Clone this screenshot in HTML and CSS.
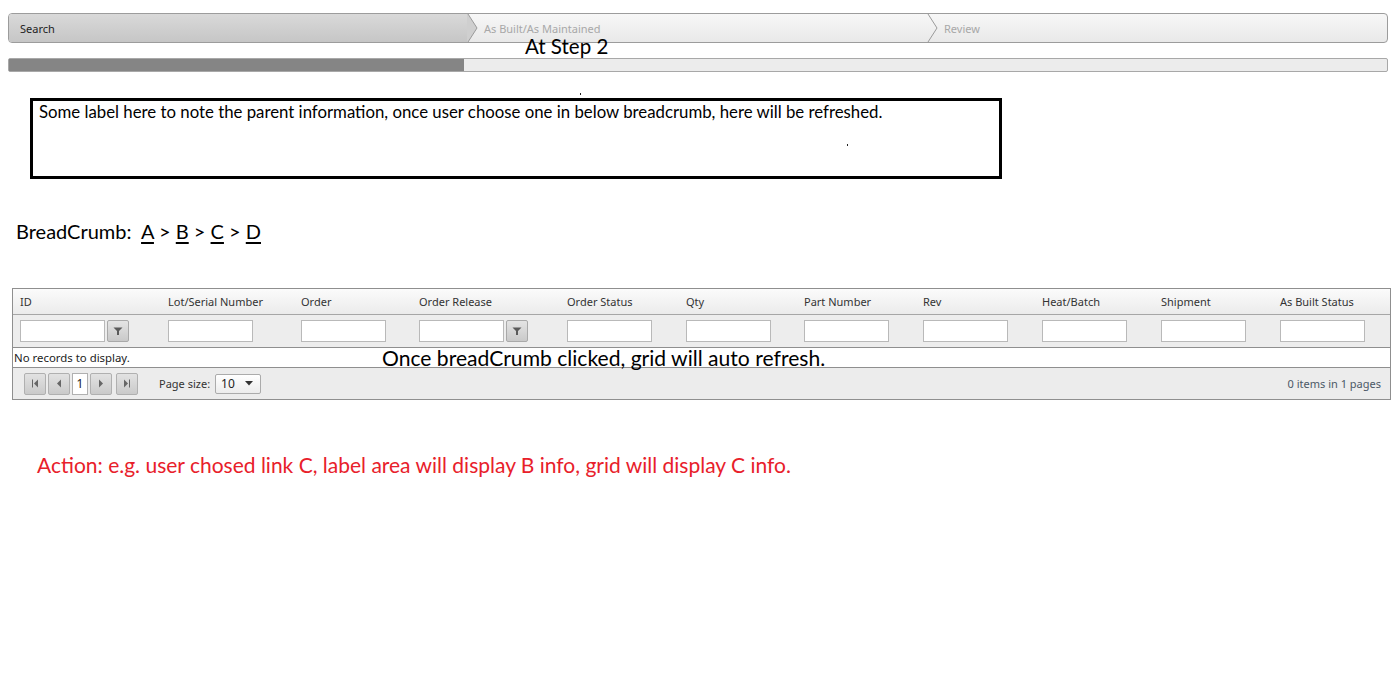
FILE: index.html
```html
<!DOCTYPE html>
<html>
<head>
<meta charset="utf-8">
<link rel="stylesheet" href="styles.css">
</head>
<body>
<div class="page">
  <div class="top">
    <div class="wizard">
      <div class="step step-active"><span>Search</span>
        <svg class="chev" width="14" height="28" viewBox="0 0 14 28"><polygon points="0,0 1,0 10,14 1,28 0,28" fill="#cdcdcd"/><polyline points="1,0 10,14 1,28" fill="none" stroke="#9a9a9a" stroke-width="1"/></svg>
      </div>
      <div class="step step-2"><span>As Built/As Maintained</span>
        <svg class="chev" width="14" height="28" viewBox="0 0 14 28"><polyline points="1,0 10,14 1,28" fill="none" stroke="#9a9a9a" stroke-width="1"/></svg>
      </div>
      <div class="step step-3"><span>Review</span></div>
    </div>
    <div class="note-step">At Step 2</div>
    <div class="progress"><div class="progress-fill"></div></div>
  </div>

  <div class="label-box">Some label here to note the parent information, once user choose one in below breadcrumb, here will be refreshed.<span class="dot dot-a"></span><span class="dot dot-b"></span></div>

  <div class="crumbs">BreadCrumb:&nbsp; <a>A</a> &gt; <a>B</a> &gt; <a>C</a> &gt; <a>D</a></div>

  <div class="grid-wrap">
    <div class="grid">
      <div class="row head">
        <div>ID</div><div>Lot/Serial Number</div><div>Order</div><div>Order Release</div><div>Order Status</div><div>Qty</div><div>Part Number</div><div>Rev</div><div>Heat/Batch</div><div>Shipment</div><div>As Built Status</div>
      </div>
      <div class="row filter">
        <div class="fcell"><span class="inp"></span><span class="fbtn"><svg width="10" height="10" viewBox="0 0 10 10"><path d="M0.5 1.5h9l-3.5 3.5v4h-2v-4z" fill="#5a5a5a"/></svg></span></div>
        <div class="fcell"><span class="inp"></span></div>
        <div class="fcell"><span class="inp"></span></div>
        <div class="fcell"><span class="inp"></span><span class="fbtn"><svg width="10" height="10" viewBox="0 0 10 10"><path d="M0.5 1.5h9l-3.5 3.5v4h-2v-4z" fill="#5a5a5a"/></svg></span></div>
        <div class="fcell"><span class="inp"></span></div>
        <div class="fcell"><span class="inp"></span></div>
        <div class="fcell"><span class="inp"></span></div>
        <div class="fcell"><span class="inp"></span></div>
        <div class="fcell"><span class="inp"></span></div>
        <div class="fcell"><span class="inp"></span></div>
        <div class="fcell"><span class="inp"></span></div>
      </div>
      <div class="norec">No records to display.</div>
      <div class="pager">
        <div class="pbtns">
          <span class="pbtn"><svg width="8" height="9" viewBox="0 0 8 9"><rect x="1" y="0.5" width="1" height="8" fill="#666"/><polygon points="7,0.5 3,4.5 7,8.5" fill="#666"/></svg></span>
          <span class="pbtn"><svg width="8" height="9" viewBox="0 0 8 9"><polygon points="6,0.5 2,4.5 6,8.5" fill="#666"/></svg></span>
          <span class="pnum">1</span>
          <span class="pbtn"><svg width="8" height="9" viewBox="0 0 8 9"><polygon points="2,0.5 6,4.5 2,8.5" fill="#666"/></svg></span>
          <span class="pbtn last"><svg width="8" height="9" viewBox="0 0 8 9"><polygon points="1,0.5 5,4.5 1,8.5" fill="#666"/><rect x="6" y="0.5" width="1" height="8" fill="#666"/></svg></span>
        </div>
        <span class="psize-label">Page size:</span>
        <span class="psize">10<svg width="8" height="5" viewBox="0 0 8 5"><polygon points="0,0 8,0 4,4.5" fill="#333"/></svg></span>
        <span class="pinfo">0 items in 1 pages</span>
      </div>
    </div>
    <div class="note-grid">Once breadCrumb clicked, grid will auto refresh.</div>
  </div>

  <div class="action">Action: e.g. user chosed link C, label area will display B info, grid will display C info.</div>
</div>
</body>
</html>
```

FILE: styles.css
```css
html, body {
  margin: 0;
  padding: 0;
  background: #ffffff;
}
.page {
  font-family: "Lato", "Open Sans", sans-serif;
  color: #000;
  padding-top: 13px;
}
.top {
  position: relative;
  margin-left: 8px;
  width: 1380px;
}
.wizard {
  display: flex;
  height: 28px;
  border: 1px solid #9c9c9c;
  border-radius: 4px;
  background: linear-gradient(#f7f7f7, #e9e9e9);
  font-family: "Noto Sans", "Open Sans", sans-serif;
  font-size: 11px;
}
.step {
  position: relative;
  display: flex;
  align-items: center;
  color: #a8a8a8;
}
.step-active {
  width: 459px;
  padding-left: 11px;
  box-sizing: border-box;
  color: #222;
  background: linear-gradient(#d9d9d9, #c6c6c6);
  border-radius: 3px 0 0 3px;
}
.step-active .chev polygon { fill: #cfcfcf; }
.step-2 {
  width: 460px;
  padding-left: 16px;
  box-sizing: border-box;
}
.step-3 {
  flex: 1;
  padding-left: 16px;
}
.chev {
  position: absolute;
  left: 100%;
  top: 0;
  margin-left: -1px;
  z-index: 2;
}
.note-step {
  position: absolute;
  left: 517px;
  top: 21px;
  font-size: 20.5px;
  line-height: 24px;
  z-index: 3;
}
.progress {
  margin-top: 15px;
  height: 12px;
  border: 1px solid #a8a8a8;
  border-radius: 2px;
  background: #ececec;
}
.progress-fill {
  width: 455px;
  height: 100%;
  background: #858585;
}
.label-box {
  position: relative;
  margin: 26px 0 0 30px;
  width: 972px;
  height: 81px;
  box-sizing: border-box;
  border: 3px solid #000;
  padding: 0 6px;
  font-size: 16.8px;
  line-height: 22px;
}
.dot {
  position: absolute;
  width: 1px;
  height: 2px;
  background: #222;
}
.dot-a { left: 547px; top: -8px; }
.dot-b { left: 814px; top: 43px; }
.crumbs {
  margin: 39px 0 0 16px;
  font-size: 20px;
  line-height: 26px;
}
.crumbs a {
  text-decoration: underline;
  text-underline-offset: 3px;
}
.grid-wrap {
  position: relative;
  margin: 44px 0 0 12px;
  width: 1379px;
}
.grid {
  border: 1px solid #8f8f8f;
  font-family: "Noto Sans", "Open Sans", sans-serif;
  font-size: 11px;
  color: #333;
}
.row {
  display: grid;
  grid-template-columns: 148px 133px 118px 148px 119px 118px 119px 119px 119px 119px 118px;
}
.head {
  height: 25px;
  align-items: center;
  background: linear-gradient(#fbfbfb, #ebebeb);
  border-bottom: 1px solid #a6a6a6;
}
.head > div {
  padding-left: 7px;
}
.filter {
  height: 32px;
  align-items: center;
  background: #ededed;
  border-bottom: 1px solid #8f8f8f;
}
.fcell {
  display: flex;
  align-items: center;
  gap: 2px;
  padding-left: 7px;
}
.inp {
  width: 83px;
  height: 20px;
  background: #fff;
  border: 1px solid #b9b9b9;
}
.fbtn {
  width: 20px;
  height: 20px;
  display: flex;
  align-items: center;
  justify-content: center;
  background: linear-gradient(#e4e4e4, #c9c9c9);
  border: 1px solid #a9a9a9;
  border-radius: 2px;
}
.norec {
  height: 19px;
  line-height: 19px;
  padding-left: 1px;
  background: #fff;
  border-bottom: 1px solid #8f8f8f;
  color: #222;
  font-size: 11.4px;
}
.pager {
  height: 31px;
  display: flex;
  align-items: center;
  background: #ececec;
  padding-left: 11px;
  color: #333;
}
.pbtns {
  display: flex;
  align-items: center;
  gap: 2px;
}
.pbtn {
  width: 20px;
  height: 20px;
  display: flex;
  align-items: center;
  justify-content: center;
  background: linear-gradient(#e2e2e2, #cacaca);
  border: 1px solid #b0b0b0;
  border-radius: 2px;
}
.pbtn.last { margin-left: 2px; }
.pnum {
  width: 14px;
  height: 20px;
  line-height: 20px;
  text-align: center;
  background: #fff;
  border: 1px solid #b0b0b0;
  font-size: 12px;
  color: #222;
}
.psize-label {
  margin-left: 21px;
}
.psize {
  margin-left: 5px;
  width: 46px;
  height: 20px;
  box-sizing: border-box;
  display: flex;
  align-items: center;
  justify-content: space-between;
  padding: 0 7px 0 5px;
  border: 1px solid #ababab;
  border-radius: 2px;
  background: linear-gradient(#ffffff, #ececec);
  font-size: 12px;
  color: #222;
}
.pinfo {
  margin-left: auto;
  margin-right: 9px;
  color: #4b5866;
}
.note-grid {
  position: absolute;
  left: 370px;
  top: 58px;
  font-size: 21.1px;
  line-height: 24px;
  color: #000;
}
.action {
  margin: 52px 0 0 37px;
  font-size: 21px;
  line-height: 26px;
  color: #e8202a;
}
```
